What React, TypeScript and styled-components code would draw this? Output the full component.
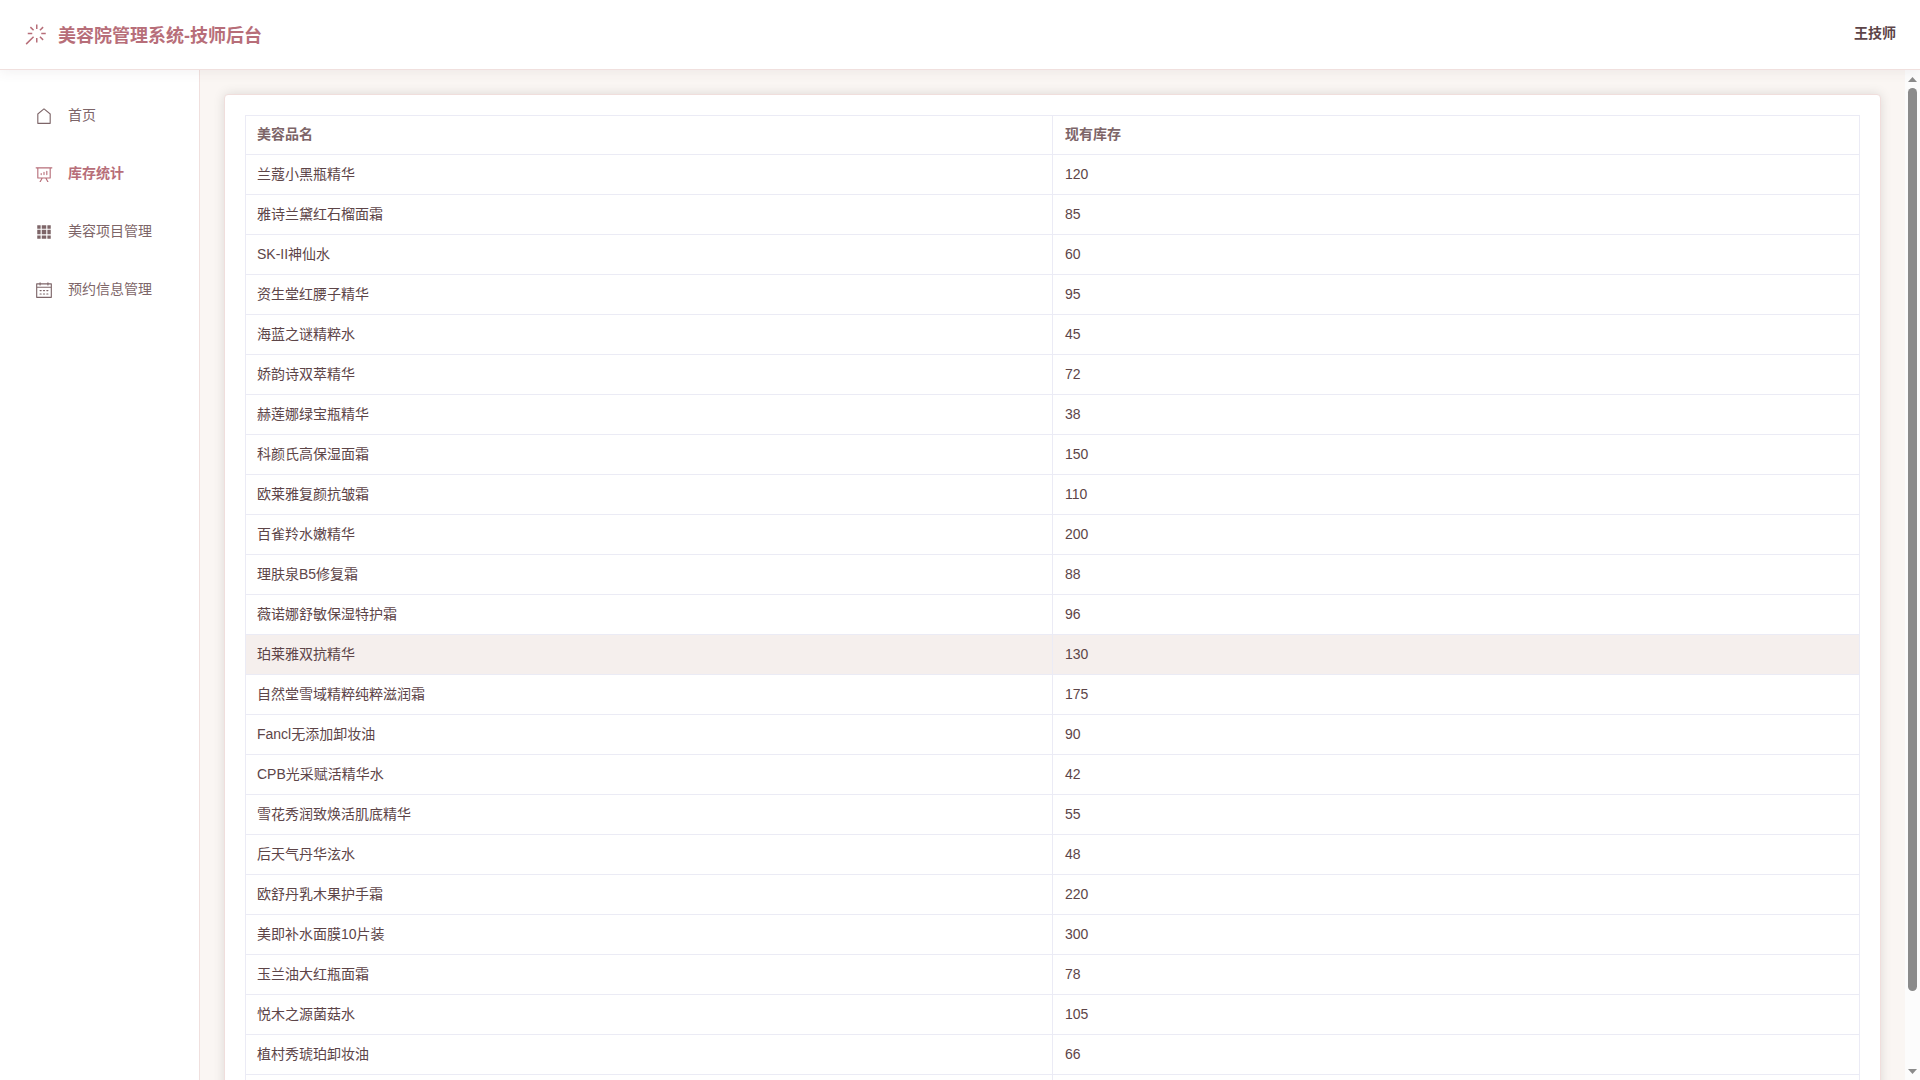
import React, { useEffect, useRef, useState } from "react";
import styled, { createGlobalStyle } from "styled-components";

const GlobalStyle = createGlobalStyle`
  *, *::before, *::after { box-sizing: border-box; }
  body {
    margin: 0;
    font-family: "Liberation Sans", "Noto Sans CJK SC", sans-serif;
    font-size: 14px;
    color: #5d4548;
    background: #faf6f3;
  }
`;

const Page = styled.div`
  display: flex;
  flex-direction: column;
  height: 100vh;
`;

const Header = styled.header`
  position: relative;
  z-index: 1;
  display: flex;
  flex: none;
  align-items: center;
  justify-content: space-between;
  height: 70px;
  padding: 0 24px;
  background: #fff;
  border-bottom: 1px solid #f0e0de;
  box-shadow: 0 2px 12px rgba(93, 69, 72, 0.08);
`;

const Brand = styled.div`
  display: flex;
  align-items: center;
  gap: 10px;
  color: #b76e79;
`;

const Title = styled.h1`
  margin: 0;
  padding-top: 2px;
  font-size: 18px;
  line-height: 24px;
  font-weight: 700;
`;

const UserName = styled.span`
  padding-bottom: 4px;
  line-height: 20px;
  font-weight: 700;
`;

const Body = styled.div`
  display: flex;
  flex: 1;
  min-height: 0;
`;

const Sidebar = styled.nav`
  flex: none;
  width: 200px;
  background: #fff;
  border-right: 1px solid #f0e0de;
`;

const Menu = styled.ul`
  display: flex;
  flex-direction: column;
  gap: 8px;
  margin: 0;
  padding: 21px 12px;
  list-style: none;
`;

const MenuLink = styled.a<{ $active: boolean }>`
  display: flex;
  align-items: center;
  gap: 12px;
  height: 50px;
  padding: 0 20px;
  text-decoration: none;
  white-space: nowrap;
  color: ${(p) => (p.$active ? "#b76e79" : "#7d6568")};
  font-weight: ${(p) => (p.$active ? 700 : 400)};
`;

const MenuLabel = styled.span`
  padding-bottom: 2px;
  line-height: 20px;
`;

const IconSlot = styled.span`
  display: flex;
  flex: none;
  justify-content: center;
  width: 24px;
`;

const Main = styled.main`
  flex: 1;
  min-width: 0;
  padding: 24px;
  overflow-y: scroll;
  scrollbar-width: none;
`;

const Card = styled.section`
  padding: 20px;
  background: #fff;
  border: 1px solid #f0dedc;
  border-radius: 4px;
  box-shadow: 0 0 12px rgba(0, 0, 0, 0.12);
`;

const Table = styled.table`
  width: 100%;
  table-layout: fixed;
  border-collapse: collapse;
  text-align: left;

  th:first-child,
  td:first-child {
    padding-left: 11px;
  }
`;

const Row = styled.tr<{ $hovered?: boolean }>`
  height: 40px;
  background: ${(p) => (p.$hovered ? "#f5efed" : "#fff")};
`;

const Cell = styled.td`
  padding: 8px 12px;
  border: 1px solid #ebebf5;
  line-height: 23px;
`;

const HeadCell = styled.th`
  padding: 7px 12px 9px;
  border: 1px solid #ebebf5;
  line-height: 22px;
  font-weight: 700;
  color: #7d6568;
`;

const Rail = styled.div`
  display: flex;
  flex: none;
  flex-direction: column;
  align-items: center;
  width: 15px;
  background: #fcfcfc;
`;

const RailButton = styled.button`
  display: flex;
  flex: none;
  align-items: center;
  justify-content: center;
  width: 15px;
  height: 18px;
  padding: 0;
  border: 0;
  background: none;
`;

const Track = styled.div`
  flex: 1;
  min-height: 0;
`;

const Thumb = styled.div`
  width: 9px;
  border-radius: 5px;
  background: #8b8b8b;
`;

const icons = {
  wand: "M512 64h64v192h-64V64zm0 576h64v192h-64V640zM160 480v-64h192v64H160zm576 0v-64h192v64H736zM249.856 199.04l45.248-45.184L430.848 289.6 385.6 334.848 249.856 199.104zM657.152 606.4l45.248-45.248 135.744 135.744-45.248 45.248L657.152 606.4zM114.048 923.2 68.8 877.952l316.8-316.8 45.248 45.248-316.8 316.8zM702.4 334.848 657.152 289.6l135.744-135.744 45.248 45.248L702.4 334.848z",
  house: "M192 413.952V896h640V413.952L512 147.328 192 413.952zM139.52 374.4l352-293.312a32 32 0 0 1 40.96 0l352 293.312A32 32 0 0 1 896 398.976V928a32 32 0 0 1-32 32H160a32 32 0 0 1-32-32V398.976a32 32 0 0 1 11.52-24.576z",
  board: "m665.216 768 110.848 192h-73.856L591.36 768H433.024L322.176 960H248.32l110.848-192H160a32 32 0 0 1-32-32V192H64a32 32 0 0 1 0-64h896a32 32 0 1 1 0 64h-64v544a32 32 0 0 1-32 32H665.216zM832 192H192v512h640V192zM352 448a32 32 0 0 1 32 32v64a32 32 0 0 1-64 0v-64a32 32 0 0 1 32-32zm160-64a32 32 0 0 1 32 32v128a32 32 0 0 1-64 0V416a32 32 0 0 1 32-32zm160-64a32 32 0 0 1 32 32v192a32 32 0 1 1-64 0V352a32 32 0 0 1 32-32z",
  grid: "M640 384v256H384V384h256zm64 0h192v256H704V384zm-64 512H384V704h256v192zm64 0V704h192v192H704zm-64-768v192H384V128h256zm64 0h192v192H704V128zM320 384v256H128V384h192zm0 512H128V704h192v192zm0-768v192H128V128h192z",
  calendar: "M128 384v512h768V192H768v32a32 32 0 1 1-64 0v-32H320v32a32 32 0 0 1-64 0v-32H128v128h768v64H128zm192-256h384V96a32 32 0 1 1 64 0v32h160a32 32 0 0 1 32 32v768a32 32 0 0 1-32 32H96a32 32 0 0 1-32-32V160a32 32 0 0 1 32-32h160V96a32 32 0 0 1 64 0v32zm-32 384h64a32 32 0 0 1 0 64h-64a32 32 0 0 1 0-64zm0 192h64a32 32 0 1 1 0 64h-64a32 32 0 1 1 0-64zm192-192h64a32 32 0 0 1 0 64h-64a32 32 0 0 1 0-64zm0 192h64a32 32 0 1 1 0 64h-64a32 32 0 1 1 0-64zm192-192h64a32 32 0 1 1 0 64h-64a32 32 0 1 1 0-64zm0 192h64a32 32 0 1 1 0 64h-64a32 32 0 1 1 0-64z",
};

type IconName = keyof typeof icons;

function Icon({ name, size }: { name: IconName; size: number }) {
  return (
    <svg viewBox="0 0 1024 1024" width={size} height={size} fill="currentColor" aria-hidden="true">
      <path d={icons[name]} />
    </svg>
  );
}

const menu: { icon: IconName; label: string; active?: boolean }[] = [
  { icon: "house", label: "首页" },
  { icon: "board", label: "库存统计", active: true },
  { icon: "grid", label: "美容项目管理" },
  { icon: "calendar", label: "预约信息管理" },
];

const stock: [string, number | string][] = [
  ["兰蔻小黑瓶精华", 120],
  ["雅诗兰黛红石榴面霜", 85],
  ["SK-II神仙水", 60],
  ["资生堂红腰子精华", 95],
  ["海蓝之谜精粹水", 45],
  ["娇韵诗双萃精华", 72],
  ["赫莲娜绿宝瓶精华", 38],
  ["科颜氏高保湿面霜", 150],
  ["欧莱雅复颜抗皱霜", 110],
  ["百雀羚水嫩精华", 200],
  ["理肤泉B5修复霜", 88],
  ["薇诺娜舒敏保湿特护霜", 96],
  ["珀莱雅双抗精华", 130],
  ["自然堂雪域精粹纯粹滋润霜", 175],
  ["Fancl无添加卸妆油", 90],
  ["CPB光采赋活精华水", 42],
  ["雪花秀润致焕活肌底精华", 55],
  ["后天气丹华泫水", 48],
  ["欧舒丹乳木果护手霜", 220],
  ["美即补水面膜10片装", 300],
  ["玉兰油大红瓶面霜", 78],
  ["悦木之源菌菇水", 105],
  ["植村秀琥珀卸妆油", 66],
  ["", ""],
];

const hoveredRow = 12;

export default function App() {
  const mainRef = useRef<HTMLElement>(null);
  const trackRef = useRef<HTMLDivElement>(null);
  const [thumb, setThumb] = useState({ top: 0, height: 0 });

  const measure = () => {
    const main = mainRef.current;
    const track = trackRef.current;
    if (!main || !track) return;
    const scale = track.clientHeight / main.scrollHeight;
    setThumb({
      top: Math.round(main.scrollTop * scale),
      height: Math.round(main.clientHeight * scale),
    });
  };

  useEffect(() => {
    measure();
    window.addEventListener("resize", measure);
    return () => window.removeEventListener("resize", measure);
  }, []);

  const scrollBy = (top: number) => mainRef.current?.scrollBy({ top });

  return (
    <Page>
      <GlobalStyle />
      <Header>
        <Brand>
          <Icon name="wand" size={24} />
          <Title>美容院管理系统-技师后台</Title>
        </Brand>
        <UserName>王技师</UserName>
      </Header>
      <Body>
        <Sidebar>
          <Menu>
            {menu.map((item) => (
              <li key={item.label}>
                <MenuLink href="#" $active={!!item.active}>
                  <IconSlot>
                    <Icon name={item.icon} size={18} />
                  </IconSlot>
                  <MenuLabel>{item.label}</MenuLabel>
                </MenuLink>
              </li>
            ))}
          </Menu>
        </Sidebar>
        <Main ref={mainRef} onScroll={measure}>
          <Card>
            <Table>
              <thead>
                <tr>
                  <HeadCell scope="col">美容品名</HeadCell>
                  <HeadCell scope="col">现有库存</HeadCell>
                </tr>
              </thead>
              <tbody>
                {stock.map(([name, count], i) => (
                  <Row key={i} $hovered={i === hoveredRow}>
                    <Cell>{name}</Cell>
                    <Cell>{count}</Cell>
                  </Row>
                ))}
              </tbody>
            </Table>
          </Card>
        </Main>
        <Rail>
          <RailButton type="button" aria-label="向上滚动" onClick={() => scrollBy(-40)}>
            <svg width="9" height="5" viewBox="0 0 9 5" fill="#8b8b8b">
              <path d="M4.5 0 9 5H0z" />
            </svg>
          </RailButton>
          <Track ref={trackRef}>
            <Thumb style={{ height: thumb.height, marginTop: thumb.top }} />
          </Track>
          <RailButton type="button" aria-label="向下滚动" onClick={() => scrollBy(40)}>
            <svg width="9" height="5" viewBox="0 0 9 5" fill="#8b8b8b">
              <path d="M0 0h9L4.5 5z" />
            </svg>
          </RailButton>
        </Rail>
      </Body>
    </Page>
  );
}
